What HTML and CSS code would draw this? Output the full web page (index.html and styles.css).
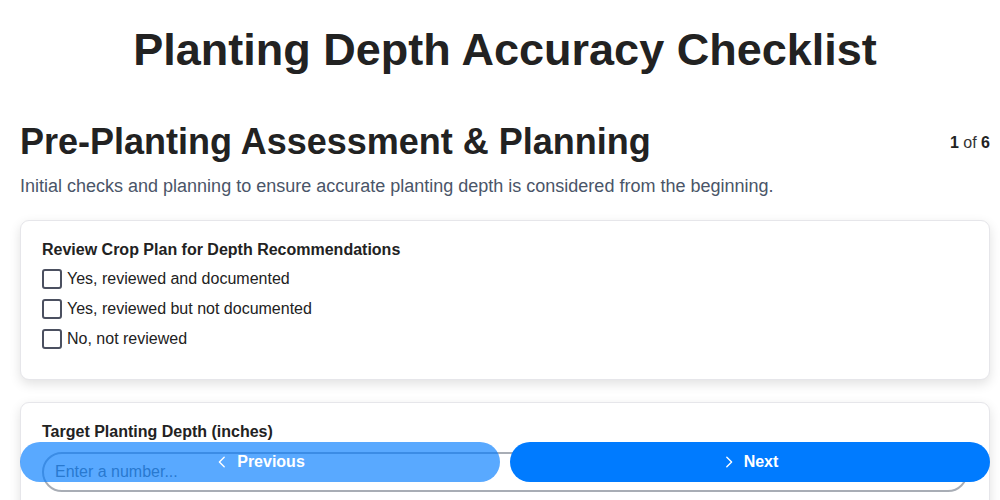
FILE: index.html
```html
<!DOCTYPE html>
<html>
<head>
<meta charset="utf-8">
<link rel="stylesheet" href="styles.css">
</head>
<body>
<div class="page">
  <h1 class="title">Planting Depth Accuracy Checklist</h1>
  <div class="section-head">
    <h2 class="section-title">Pre-Planting Assessment &amp; Planning</h2>
    <div class="progress"><b>1</b> of <b>6</b></div>
  </div>
  <p class="section-desc">Initial checks and planning to ensure accurate planting depth is considered from the beginning.</p>

  <div class="card">
    <div class="q-label">Review Crop Plan for Depth Recommendations</div>
    <div class="options">
      <label class="option"><span class="box"></span>Yes, reviewed and documented</label>
      <label class="option"><span class="box"></span>Yes, reviewed but not documented</label>
      <label class="option"><span class="box"></span>No, not reviewed</label>
    </div>
  </div>

  <div class="card">
    <div class="q-label">Target Planting Depth (inches)</div>
    <input class="num-input" type="text" placeholder="Enter a number...">
  </div>
</div>

<div class="nav">
  <button class="btn btn-prev"><svg class="chev" viewBox="0 0 16 16" width="14" height="14"><path d="M10.5 2.5 5 8l5.5 5.5" fill="none" stroke="#fff" stroke-width="1.6" stroke-linecap="round" stroke-linejoin="round"/></svg>Previous</button>
  <button class="btn btn-next"><svg class="chev" viewBox="0 0 16 16" width="14" height="14"><path d="M5.5 2.5 11 8l-5.5 5.5" fill="none" stroke="#fff" stroke-width="1.6" stroke-linecap="round" stroke-linejoin="round"/></svg>Next</button>
</div>
</body>
</html>
```
FILE: styles.css
```css
* { box-sizing: border-box; }
html, body { margin: 0; padding: 0; background: #fff; }
body {
  font-family: "Liberation Sans", Arial, sans-serif;
  color: #222;
}
.page {
  padding: 0 10px 0 20px;
}
.title {
  margin: 0;
  padding-top: 24px;
  font-size: 45px;
  line-height: 52px;
  font-weight: bold;
  text-align: center;
  color: #222;
}
.section-head {
  display: flex;
  align-items: center;
  justify-content: space-between;
  margin-top: 45px;
}
.section-title {
  margin: 0;
  font-size: 36px;
  line-height: 42px;
  font-weight: bold;
  color: #222;
}
.progress {
  font-size: 16px;
  color: #333;
  padding-top: 2px;
}
.progress b { color: #222; }
.section-desc {
  margin: 12px 0 0;
  font-size: 18px;
  line-height: 22px;
  color: #4a5568;
}
.card {
  margin-top: 23px;
  background: #fff;
  border: 1px solid #e6e6ea;
  border-radius: 9px;
  box-shadow: 0 4px 12px rgba(0,0,0,0.12);
  padding: 19px 21px 30px;
}
.card + .card { margin-top: 22px; }
.q-label {
  font-size: 16px;
  font-weight: bold;
  line-height: 20px;
  color: #222;
}
.options {
  margin-top: 9px;
  display: flex;
  flex-direction: column;
  gap: 10px;
}
.option {
  display: flex;
  align-items: center;
  font-size: 16px;
  line-height: 20px;
  color: #222;
}
.box {
  width: 20px;
  height: 20px;
  border: 2px solid #4b5060;
  border-radius: 3px;
  margin-right: 5px;
  flex: none;
}
.num-input {
  display: block;
  margin-top: 10px;
  width: 100%;
  height: 40px;
  border: 2px solid #a8adb5;
  border-radius: 20px;
  padding: 0 11px;
  font-family: "Liberation Sans", Arial, sans-serif;
  font-size: 16px;
  color: #222;
  background: #fff;
}
.num-input::placeholder { color: #757575; }
.nav {
  position: fixed;
  left: 20px;
  right: 10px;
  bottom: 18px;
  display: flex;
  gap: 10px;
}
.btn {
  flex: 1;
  height: 40px;
  border: none;
  border-radius: 20px;
  background: #007bff;
  color: #fff;
  font-family: "Liberation Sans", Arial, sans-serif;
  font-size: 16px;
  font-weight: bold;
  display: flex;
  align-items: center;
  justify-content: center;
  gap: 8px;
  padding: 0;
}
.btn-prev { opacity: 0.65; }
.chev { display: block; }
```
